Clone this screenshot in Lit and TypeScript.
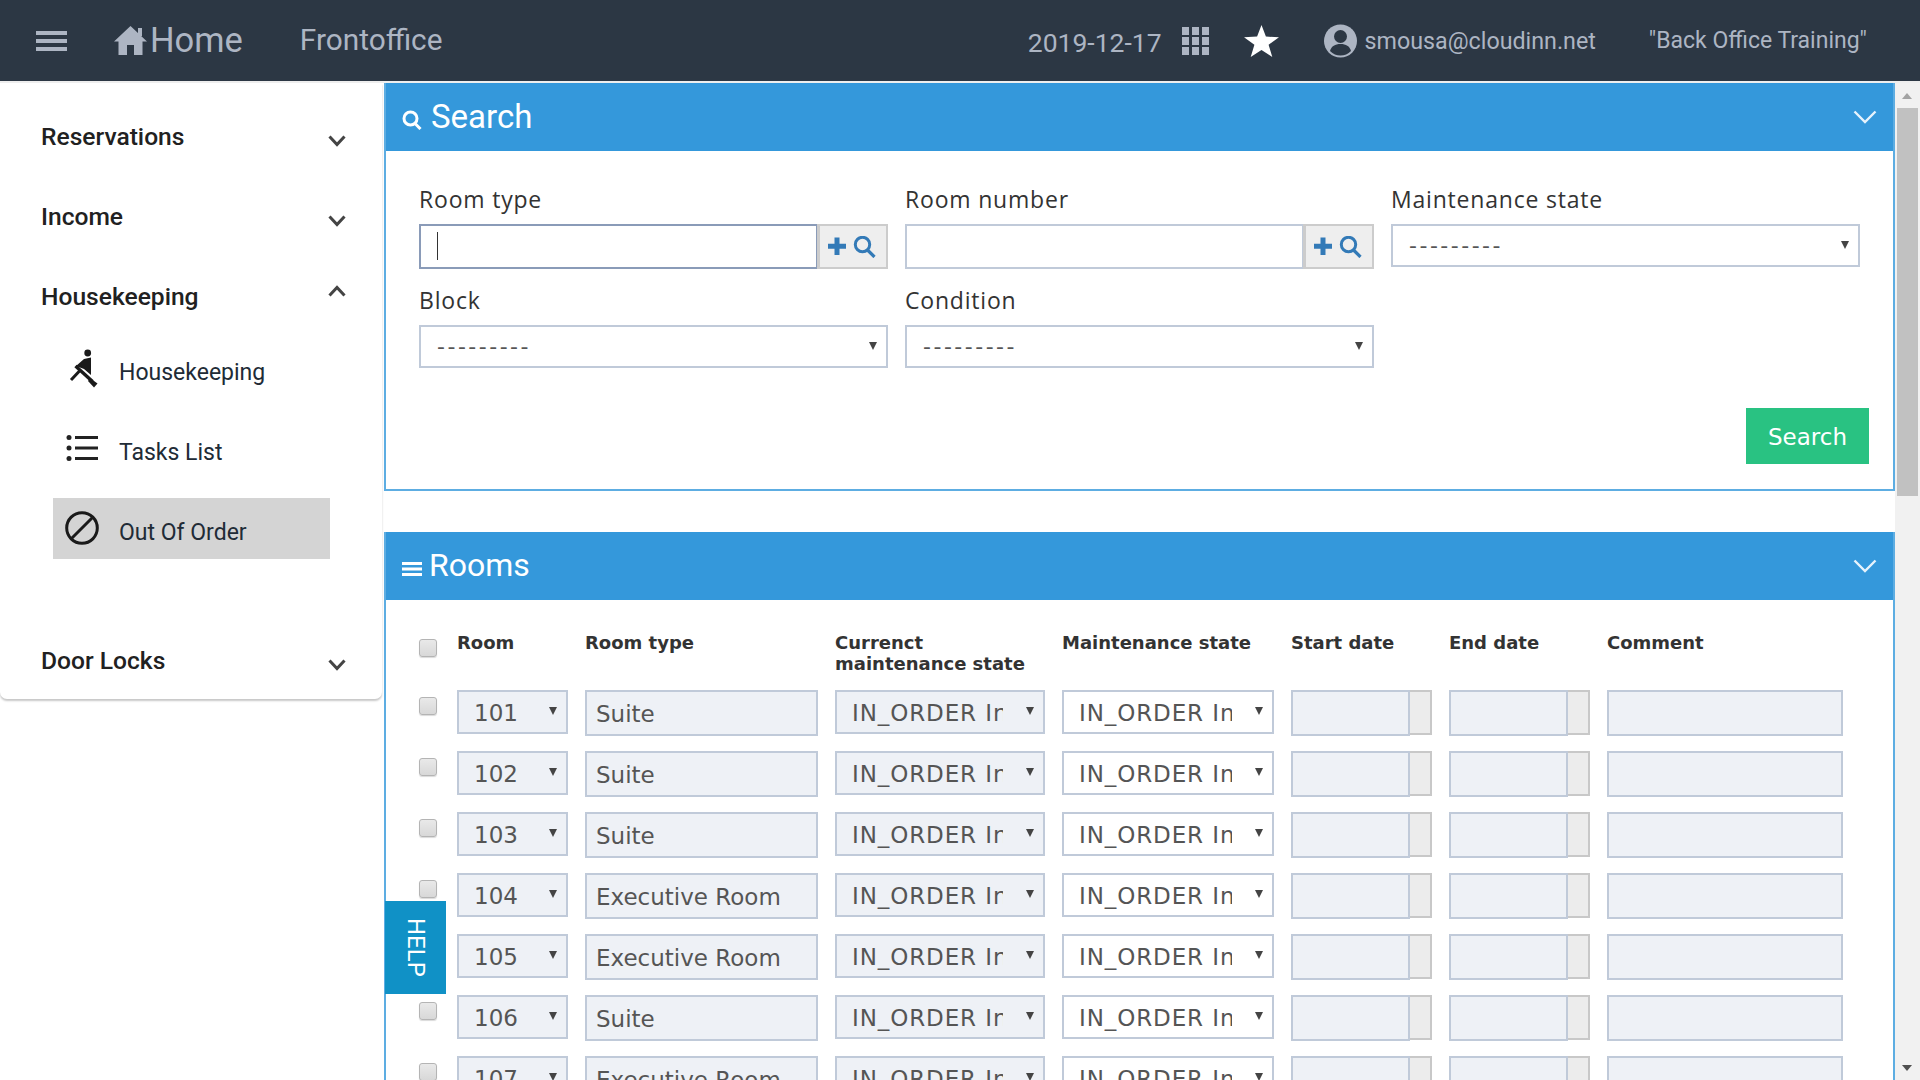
import { LitElement, html, css, svg } from 'lit';
import { customElement, state } from 'lit/decorators.js';

interface Room {
  number: number;
  type: string;
}

const ROOMS: Room[] = [
  { number: 101, type: 'Suite' },
  { number: 102, type: 'Suite' },
  { number: 103, type: 'Suite' },
  { number: 104, type: 'Executive Room' },
  { number: 105, type: 'Executive Room' },
  { number: 106, type: 'Suite' },
  { number: 107, type: 'Executive Room' },
];

const DASHES = '---------';
const STATE_TEXT = 'IN_ORDER In';

const chevron = (up = false) => html`
  <svg class="chev" width="18" height="12" viewBox="0 0 18 12" fill="none" stroke="#444" stroke-width="3">
    ${up ? svg`<polyline points="1.5,10.5 9,2.5 16.5,10.5"></polyline>` : svg`<polyline points="1.5,1.5 9,9.5 16.5,1.5"></polyline>`}
  </svg>
`;

const headChevron = html`
  <svg class="head-chev" width="24" height="14" viewBox="0 0 24 14" fill="none" stroke="#e6f3fc" stroke-width="2.4">
    <polyline points="1.5,1.5 12,12 22.5,1.5"></polyline>
  </svg>
`;

const lookupAddon = html`
  <div class="addon">
    <svg width="50" height="22" viewBox="0 0 50 22" fill="#337ab7">
      <path d="M6.500 1.500h5v6.300H18v4.900h-6.500V19h-5v-6.300H0V7.800h6.500z"></path>
      <circle cx="34.500" cy="8.500" r="7.200" fill="none" stroke="#337ab7" stroke-width="3"></circle>
      <path d="M39.500 14l7 7" stroke="#337ab7" stroke-width="3.200" fill="none"></path>
    </svg>
  </div>
`;

@customElement('app-root')
export class AppRoot extends LitElement {
  static styles = css`
    :host {
      display: block;
      height: 100vh;
      overflow: hidden;
      position: relative;
      background: #fff;
      font-family: 'DejaVu Sans', Verdana, sans-serif;
      color: #333;
    }

    /* top bar */
    .topbar {
      height: 81px;
      border-bottom: 2px solid #eee;
      background: #2c3744;
      color: #adb5c3;
      display: flex;
      align-items: center;
      padding: 0 53px 0 36px;
      font-family: Roboto, sans-serif;
    }
    .topbar svg {
      flex: none;
      display: block;
    }
    .burger {
      margin-right: 47px;
    }
    .home {
      font-size: 34.500px;
      margin: -2px 0 0 3px;
    }
    .front {
      font-size: 29.800px;
      margin: -2px 0 0 57px;
    }
    .date {
      font-size: 26.500px;
      margin-left: auto;
      margin-top: 3px;
    }
    .grid-icon {
      margin-left: 20px;
    }
    .star {
      margin-left: 35px;
    }
    .user-icon {
      margin-left: 45px;
    }
    .email {
      font-size: 23.250px;
      margin-left: 8px;
    }
    .hotel {
      font-size: 23px;
      margin-left: 53px;
    }

    .shell {
      display: flex;
      height: calc(100vh - 83px);
    }

    /* side menu */
    .side {
      flex: none;
      width: 384px;
    }
    .menu {
      width: 382px;
      box-sizing: border-box;
      padding: 23px 0 9px;
      background: #fff;
      border-radius: 0 0 7px 7px;
      box-shadow: 0 2px 2px rgba(0, 0, 0, 0.22);
    }
    .group {
      height: 60px;
      margin-bottom: 20px;
      padding: 0 36px 0 41px;
      display: flex;
      align-items: center;
      justify-content: space-between;
      font-family: Roboto, sans-serif;
      font-weight: 500;
      font-size: 24.600px;
      color: #212121;
    }
    .group.open {
      margin-bottom: 12px;
    }
    .group.last {
      margin: 71px 0 0;
    }
    .chev {
      margin-top: 10px;
    }
    .group.open .chev {
      margin-top: -10px;
    }
    .sub {
      width: 277px;
      height: 61px;
      margin: 0 0 19px 53px;
      display: flex;
      align-items: center;
      font-family: Roboto, sans-serif;
      font-size: 23px;
      color: #212b36;
    }
    .sub.active {
      background: #d4d4d4;
      margin-bottom: 0;
    }
    .sub .ico {
      flex: none;
      width: 66px;
      display: flex;
      justify-content: flex-start;
      padding-left: 12px;
      box-sizing: border-box;
    }
    .sub .ico.walker {
      padding-left: 15px;
    }
    .sub .ico.tasks {
      padding-left: 13px;
    }
    .sub .ico svg {
      margin-top: -1px;
    }
    .sub span {
      padding-top: 8px;
    }

    /* content */
    .content {
      flex: 1;
      min-width: 0;
      overflow: hidden;
    }
    .panel {
      border: 2px solid #5dade2;
      border-top: 0;
      background: #fff;
    }
    .panel + .panel {
      margin-top: 41px;
      border-bottom: 0;
    }
    .panel-head {
      height: 68px;
      background: #3498db;
      color: #fff;
      display: flex;
      align-items: center;
      padding: 0 16px 0 16px;
      font-family: Roboto, sans-serif;
      font-size: 32px;
    }
    .panel-head .title {
      margin: -2px 0 0 7px;
    }
    .panel-head .title.search {
      margin-left: 9px;
      font-size: 33px;
    }
    .panel-head svg {
      flex: none;
    }
    .panel-head .title-ico {
      margin-top: 6px;
    }
    .head-chev {
      margin-left: auto;
    }

    .search-body {
      padding: 33px 24px 25px 33px;
    }
    .fields {
      display: grid;
      grid-template-columns: 469px 469px 469px;
      column-gap: 17px;
      row-gap: 16px;
    }
    .field {
      height: 85px;
    }
    .field label {
      display: block;
      height: 40px;
      line-height: 30px;
      font-family: 'Open Sans', sans-serif;
      font-size: 23px;
      letter-spacing: 0.8px;
      color: #333;
    }
    .lookup {
      display: flex;
    }
    .box {
      box-sizing: border-box;
      border: 2px solid #c0cad9;
      background: #fff;
      font-size: 23px;
      color: #555;
    }
    .lookup .box {
      flex: 1;
      height: 45px;
      border-right-width: 1px;
    }
    .box.focus {
      border-color: #8a9bb8;
      padding: 6px 0 0 16px;
    }
    .caret {
      width: 1px;
      height: 28px;
      background: #333;
    }
    .addon {
      flex: none;
      width: 71px;
      height: 45px;
      box-sizing: border-box;
      border: 2px solid #ccc;
      border-left-width: 3px;
      background: #eee;
      display: flex;
      align-items: center;
      justify-content: center;
    }
    .select {
      height: 44px;
      display: flex;
      align-items: center;
      padding: 0 9px 0 16px;
    }
    .field .select {
      height: 43px;
    }
    .select .val {
      flex: 1;
      min-width: 0;
      overflow: hidden;
      white-space: nowrap;
      padding-top: 2px;
    }
    .select .dashes {
      letter-spacing: 2.500px;
      font-size: 22px;
      padding-top: 0;
    }
    .select .state {
      letter-spacing: 0.9px;
    }
    .select .arrow {
      flex: none;
      margin-left: 23px;
      width: 0;
      height: 0;
      border-left: 4.500px solid transparent;
      border-right: 4.500px solid transparent;
      border-top: 8px solid #444;
      margin-bottom: 2px;
    }
    .actions {
      display: flex;
      justify-content: flex-end;
      margin-top: 38px;
    }
    .btn {
      width: 123px;
      height: 56px;
      padding-top: 1px;
      box-sizing: border-box;
      background: #29c282;
      color: #fff;
      display: flex;
      align-items: center;
      justify-content: center;
      font-size: 23px;
    }

    /* rooms table */
    .rooms-body {
      padding: 32px 0 0 33px;
      display: grid;
      grid-template-columns: 21px 111px 233px 210px 212px 141px 141px 236px;
      column-gap: 17px;
      row-gap: 15px;
      height: 600px;
      align-content: start;
    }
    .th {
      height: 43px;
      font-weight: 700;
      font-size: 18px;
      line-height: 21px;
      color: #333;
    }
    .cb {
      width: 18px;
      height: 18px;
      box-sizing: border-box;
      margin-top: 7px;
      border: 1px solid #b4b4b4;
      border-radius: 3px;
      background: linear-gradient(#e9e9e9, #d8d8d8);
      box-shadow: 0 1px 1px rgba(0, 0, 0, 0.15);
    }
    .disabled {
      background: #eef1f6;
    }
    .input {
      height: 46px;
      padding: 5px 0 0 9px;
      line-height: 35px;
    }
    .cell-select .select {
      padding-left: 15px;
    }
    .date-cell {
      display: flex;
      align-items: flex-start;
    }
    .date-cell .box {
      width: 119px;
      height: 46px;
      flex: none;
    }
    .date-add {
      flex: none;
      width: 22px;
      height: 45px;
      box-sizing: border-box;
      border: 2px solid #c8c8c8;
      border-left-width: 0;
      background: #ececec;
    }

    .help {
      position: absolute;
      left: 385px;
      top: 901px;
      width: 61px;
      height: 93px;
      background: #1091c6;
      color: #fff;
      display: flex;
      align-items: center;
      justify-content: center;
      writing-mode: vertical-rl;
      font-family: Roboto, sans-serif;
      font-size: 24px;
    }

    /* fake scrollbar, the page is a fixed picture */
    .scroll {
      flex: none;
      width: 25px;
      background: #f1f1f1;
      position: relative;
    }
    .thumb {
      position: absolute;
      left: 2px;
      right: 2px;
      top: 25px;
      height: 388px;
      background: #c1c1c1;
    }
    .scroll-up,
    .scroll-down {
      position: absolute;
      left: 7px;
      width: 0;
      height: 0;
      border-left: 5.500px solid transparent;
      border-right: 5.500px solid transparent;
    }
    .scroll-up {
      top: 10px;
      border-bottom: 6px solid #a3a3a3;
    }
    .scroll-down {
      bottom: 9px;
      border-top: 6px solid #505050;
    }
  `;

  @state()
  private rooms = ROOMS;

  private renderTopbar() {
    return html`
      <header class="topbar">
        <svg class="burger" width="31" height="20" viewBox="0 0 31 20" fill="#adb5c3">
          <rect width="31" height="4"></rect>
          <rect y="8" width="31" height="4"></rect>
          <rect y="16" width="31" height="4"></rect>
        </svg>
        <svg width="33" height="29" viewBox="0 0 33 29" fill="#adb5c3">
          <path d="M16.500 0L33 15.500h-4.500V29H20V19h-7v10H4.500V15.500H0z"></path>
          <rect x="24" y="2" width="4" height="8"></rect>
        </svg>
        <span class="home">Home</span>
        <span class="front">Frontoffice</span>
        <span class="date">2019-12-17</span>
        <svg class="grid-icon" width="27" height="28" viewBox="0 0 27 28" fill="#adb5c3">
          ${[0, 10, 20].map((y) =>
            [0, 10, 20].map((x) => svg`<rect x=${x} y=${y} width="7" height="8"></rect>`)
          )}
        </svg>
        <svg class="star" width="35" height="32" viewBox="0 0 35 32" fill="#fff">
          <path d="M17.500 0l4.400 11.600L35 12.200 24.600 19.800 28.300 32l-10.800-7-10.800 7 3.700-12.200L0 12.200l13.100-.6z"></path>
        </svg>
        <svg class="user-icon" width="33" height="34" viewBox="0 0 33 34">
          <circle cx="16.500" cy="17" r="16.500" fill="#adb5c3"></circle>
          <circle cx="16.500" cy="12.500" r="6.500" fill="#2c3744"></circle>
          <path d="M6 27c1.500-5 5-7 10.500-7s9 2 10.500 7c-3 3-6.500 4.500-10.500 4.500S9 30 6 27z" fill="#2c3744"></path>
        </svg>
        <span class="email">smousa@cloudinn.net</span>
        <span class="hotel">"Back Office Training"</span>
      </header>
    `;
  }

  private renderMenu() {
    return html`
      <aside class="side">
        <nav class="menu">
          <div class="group">Reservations ${chevron()}</div>
          <div class="group">Income ${chevron()}</div>
          <div class="group open">Housekeeping ${chevron(true)}</div>
          <div class="sub">
            <div class="ico walker">
              <svg width="32" height="40" viewBox="28 16 32 40">
                <circle cx="47.700" cy="21" r="3.400" fill="#1a1a1a"></circle>
                <path d="M44 27l7-1.500V43l-7-6-8-3z" fill="#1a1a1a"></path>
                <path d="M35.500 34l17 15.500" stroke="#1a1a1a" stroke-width="3.400" fill="none"></path>
                <path d="M50 46l7.500 5.500-3.500 4-6-6.500z" fill="#1a1a1a"></path>
                <path d="M39.500 39l-8.500 9" stroke="#1a1a1a" stroke-width="3" fill="none"></path>
              </svg>
            </div>
            <span>Housekeeping</span>
          </div>
          <div class="sub">
            <div class="ico tasks">
              <svg width="32" height="26" viewBox="0 0 32 26" fill="#222">
                <circle cx="3" cy="2.500" r="2.500"></circle>
                <circle cx="3" cy="13" r="2.500"></circle>
                <circle cx="3" cy="23.500" r="2.500"></circle>
                <rect x="9" y="1" width="23" height="3"></rect>
                <rect x="9" y="11.500" width="23" height="3"></rect>
                <rect x="9" y="22" width="23" height="3"></rect>
              </svg>
            </div>
            <span>Tasks List</span>
          </div>
          <div class="sub active">
            <div class="ico">
              <svg width="34" height="34" viewBox="0 0 34 34" fill="none" stroke="#1a1a1a" stroke-width="3">
                <circle cx="17" cy="17" r="15.300"></circle>
                <path d="M6.500 27.500L27.500 6.500"></path>
              </svg>
            </div>
            <span>Out Of Order</span>
          </div>
          <div class="group last">Door Locks ${chevron()}</div>
        </nav>
      </aside>
    `;
  }

  private renderSelect(value: string, cls = '') {
    const valueCls = value === DASHES ? 'dashes' : value === STATE_TEXT ? 'state' : '';
    return html`
      <div class="box select ${cls}">
        <div class="val ${valueCls}">${value}</div>
        <div class="arrow"></div>
      </div>
    `;
  }

  private renderSearch() {
    return html`
      <section class="panel">
        <div class="panel-head">
          <svg class="title-ico" width="20" height="20" viewBox="0 0 20 20" fill="none" stroke="#fff" stroke-width="3">
            <circle cx="8.500" cy="8.500" r="6.500"></circle>
            <path d="M13 13.500l5.500 5.500"></path>
          </svg>
          <span class="title search">Search</span>
          ${headChevron}
        </div>
        <div class="search-body">
          <div class="fields">
            <div class="field">
              <label>Room type</label>
              <div class="lookup">
                <div class="box focus"><div class="caret"></div></div>
                ${lookupAddon}
              </div>
            </div>
            <div class="field">
              <label>Room number</label>
              <div class="lookup">
                <div class="box"></div>
                ${lookupAddon}
              </div>
            </div>
            <div class="field">
              <label>Maintenance state</label>
              ${this.renderSelect(DASHES)}
            </div>
            <div class="field">
              <label>Block</label>
              ${this.renderSelect(DASHES)}
            </div>
            <div class="field">
              <label>Condition</label>
              ${this.renderSelect(DASHES)}
            </div>
          </div>
          <div class="actions"><div class="btn">Search</div></div>
        </div>
      </section>
    `;
  }

  private renderRoom(room: Room) {
    return html`
      <div class="cb"></div>
      <div class="cell-select">${this.renderSelect(String(room.number), 'disabled')}</div>
      <div class="box input disabled">${room.type}</div>
      <div class="cell-select">${this.renderSelect(STATE_TEXT, 'disabled')}</div>
      <div class="cell-select">${this.renderSelect(STATE_TEXT)}</div>
      <div class="date-cell"><div class="box disabled"></div><div class="date-add"></div></div>
      <div class="date-cell"><div class="box disabled"></div><div class="date-add"></div></div>
      <div class="box input disabled"></div>
    `;
  }

  private renderRooms() {
    return html`
      <section class="panel">
        <div class="panel-head">
          <svg class="title-ico" width="20" height="14" viewBox="0 0 20 14" fill="#fff">
            <rect width="20" height="3"></rect>
            <rect y="5.500" width="20" height="3"></rect>
            <rect y="11" width="20" height="3"></rect>
          </svg>
          <span class="title">Rooms</span>
          ${headChevron}
        </div>
        <div class="rooms-body">
          <div><div class="cb"></div></div>
          <div class="th">Room</div>
          <div class="th">Room type</div>
          <div class="th">Currenct<br />maintenance state</div>
          <div class="th">Maintenance state</div>
          <div class="th">Start date</div>
          <div class="th">End date</div>
          <div class="th">Comment</div>
          ${this.rooms.map((room) => this.renderRoom(room))}
        </div>
      </section>
    `;
  }

  render() {
    return html`
      ${this.renderTopbar()}
      <div class="shell">
        ${this.renderMenu()}
        <main class="content">${this.renderSearch()} ${this.renderRooms()}</main>
        <div class="scroll">
          <div class="scroll-up"></div>
          <div class="thumb"></div>
          <div class="scroll-down"></div>
        </div>
      </div>
      <div class="help">HELP</div>
    `;
  }
}
